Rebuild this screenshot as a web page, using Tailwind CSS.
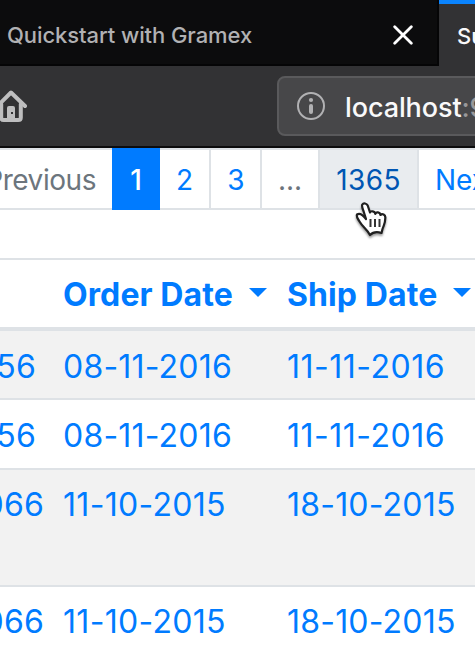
<!DOCTYPE html>
<html lang="en">
<head>
<meta charset="utf-8">
<title>Orders</title>
<script src="https://cdn.jsdelivr.net/npm/@tailwindcss/browser@4"></script>
</head>
<body class="relative w-[475px] h-[645px] overflow-hidden bg-white font-['Inter',sans-serif] text-[#007bff]">
<header class="bg-[#323234]">
  <div class="flex h-[66px]">
    <div class="flex w-[439px] shrink-0 items-center justify-between border-r-2 border-b-2 border-[#050506] bg-[#0c0c0d] pl-[7px] pr-[24px] pt-[6px]">
      <span class="whitespace-nowrap text-[22px] font-medium tracking-[-0.08px] leading-[30px] text-[#b1b1b3]">Quickstart with Gramex</span>
      <svg class="h-[20px] w-[20px]" viewBox="0 0 20 20" fill="none" stroke="#fff" stroke-width="2.8" stroke-linecap="round"><path d="M1.7 1.7 18.3 18.3M18.3 1.7 1.7 18.3"/></svg>
    </div>
    <div class="flex w-[36px] items-center overflow-hidden border-t-4 border-[#0a84ff] pl-[18px] pt-[2px]">
      <span class="whitespace-nowrap text-[22px] font-medium leading-[30px] text-[#f9f9fa]">Su</span>
    </div>
  </div>
  <div class="flex h-[82px] items-center overflow-hidden border-b-2 border-[#0c0c0d]">
    <svg class="ml-[-5px] h-[34px] w-[34px] shrink-0" viewBox="0 0 34 34" fill="none" stroke="#bebebf" stroke-width="4" stroke-linecap="round" stroke-linejoin="round"><path d="M2.5 17 16 3.5 30 17"/><path d="M6.2 15V28.5Q6.2 31 8.7 31H23.3Q25.8 31 25.8 28.5V15"/><path fill="#bebebf" stroke="none" d="M12 31V19Q12 17 14 17H18Q20 17 20 19V31Z"/><path fill="#323234" stroke="none" d="M16 23h2v2h-2z"/></svg>
    <div class="ml-[248px] flex h-[60px] w-[300px] shrink-0 items-center rounded-[8px] border-2 border-[#5a5a5c] bg-[#474749] pl-[18px]">
      <svg class="h-[28px] w-[28px] shrink-0" viewBox="0 0 28 28"><circle cx="14" cy="14" r="13" fill="none" stroke="#b1b1b3" stroke-width="2"/><circle cx="14" cy="8" r="2.1" fill="#b1b1b3"/><rect x="12" y="12" width="4" height="10" rx="2" fill="#b1b1b3"/></svg>
      <span class="ml-[20px] pt-[4px] text-[27px] font-medium leading-[36px] tracking-[-0.1px] text-[#f9f9fa]">localhost<span class="text-[#98989a]">:9988</span></span>
    </div>
  </div>
</header>
<nav class="flex h-[62px] text-[28px] leading-[58px]">
  <div class="flex w-[112px] shrink-0 justify-end border-y-2 border-[#dee2e6] pr-[16px] pt-[1px] tracking-[-0.45px] text-[#6c757d]"><span>Previous</span></div>
  <div class="w-[48px] shrink-0 bg-[#007bff] pt-[3px] text-center font-medium text-white">1</div>
  <div class="w-[51px] shrink-0 border-y-2 border-r-2 border-[#dee2e6] pt-[1px] text-center">2</div>
  <div class="w-[51px] shrink-0 border-y-2 border-r-2 border-[#dee2e6] pt-[1px] pl-[1px] text-center">3</div>
  <div class="w-[58px] shrink-0 border-y-2 border-r-2 border-[#dee2e6] pt-[1px] text-center text-[#6c757d]">...</div>
  <div class="w-[99px] shrink-0 border-y-2 border-r-2 border-[#dee2e6] bg-[#e9ecef] pt-[1px] text-center tracking-[0.4px] text-[#0056b3]">1365</div>
  <div class="w-[57px] shrink-0 overflow-hidden border-y-2 border-[#dee2e6] pl-[16px] pt-[1px]">Next</div>
</nav>
<main class="mt-[48px] w-[475px] overflow-hidden text-[32px] tracking-[0.2px]">
  <div class="grid h-[73px] grid-cols-[63px_224px_188px] border-t-2 border-b-4 border-[#dee2e6] pt-[1px] font-bold tracking-[0.1px] leading-[67px]">
    <span></span>
    <div class="flex items-center"><span class="w-[170px] whitespace-nowrap">Order Date</span><svg class="mb-[4px] ml-[16px] h-[9px] w-[18px] shrink-0" viewBox="0 0 18 9"><path fill="#007bff" d="M0 0h18L9 9z"/></svg></div>
    <div class="flex items-center"><span class="w-[150px] whitespace-nowrap">Ship Date</span><svg class="mb-[4px] ml-[16px] h-[9px] w-[18px] shrink-0" viewBox="0 0 18 9"><path fill="#007bff" d="M0 0h18L9 9z"/></svg></div>
  </div>
  <div class="grid h-[67px] grid-cols-[63px_224px_188px] bg-[#f2f2f2] pt-[2px] leading-[67px]">
    <div class="flex justify-end pr-[27px]"><span>56</span></div><span>08-11-2016</span><span class="tracking-[0.5px]">11-11-2016</span>
  </div>
  <div class="grid h-[70px] grid-cols-[63px_224px_188px] border-t-2 border-[#dee2e6] pt-[1px] leading-[69px]">
    <div class="flex justify-end pr-[27px]"><span>56</span></div><span>08-11-2016</span><span class="tracking-[0.5px]">11-11-2016</span>
  </div>
  <div class="grid h-[117px] grid-cols-[63px_224px_188px] border-t-2 border-[#dee2e6] bg-[#f2f2f2] pt-[1px] leading-[67px]">
    <div class="flex justify-end pr-[19px]"><span>066</span></div><span class="tracking-[0.3px]">11-10-2015</span><span>18-10-2015</span>
  </div>
  <div class="grid h-[70px] grid-cols-[63px_224px_188px] border-t-2 border-[#dee2e6] pt-[1px] leading-[67px]">
    <div class="flex justify-end pr-[19px]"><span>066</span></div><span class="tracking-[0.3px]">11-10-2015</span><span>18-10-2015</span>
  </div>
</main>
<svg class="absolute left-[351px] top-[199px] h-[42px] w-[40px] drop-shadow-[0_2px_1px_rgba(0,0,0,0.4)]" viewBox="0 0 40 42" stroke-linejoin="round" stroke-linecap="round"><path fill="#fff" stroke="#202020" stroke-width="2.2" d="M12.5 12C11 8 10.5 7 11.3 5.5C12.5 3.7 15.7 4.3 16.7 6.5L19 13.5C19.5 11.5 24 12 24.3 15C25 12.5 29 13 29.5 16C31 14 34.7 15.5 34.3 19C34.2 25 32.8 26 31.5 30L30.5 34C26 32.5 22 33 19 36C16 30 12 28.5 8.5 22.5C6.5 19 5 17.5 6 15.5C8.5 13.8 12 16 15 20Z"/><path fill="none" stroke="#333" stroke-width="2" stroke-linecap="butt" d="M19.5 20v8M24 20v8M28.5 20v8"/></svg>
</body>
</html>
